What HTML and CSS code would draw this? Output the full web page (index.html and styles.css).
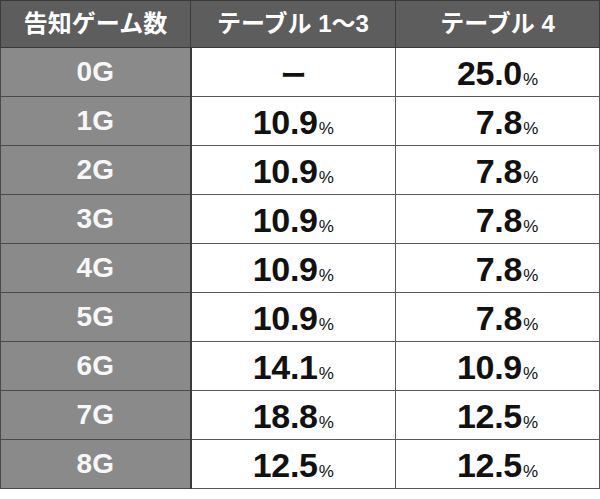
FILE: index.html
```html
<!DOCTYPE html>
<html lang="ja">
<head>
<meta charset="utf-8">
<title>告知ゲーム数</title>
<link rel="stylesheet" href="styles.css">
</head>
<body>
<table class="odds">
  <colgroup>
    <col class="c1">
    <col class="c2">
    <col class="c3">
  </colgroup>
  <thead>
    <tr class="head-row">
      <th>告知ゲーム数</th>
      <th>テーブル 1〜3</th>
      <th>テーブル 4</th>
    </tr>
  </thead>
  <tbody>
    <tr><th>0G</th><td><span class="dash">ー</span></td><td>25.0<span class="pct">%</span></td></tr>
    <tr><th>1G</th><td>10.9<span class="pct">%</span></td><td class="short">7.8<span class="pct">%</span></td></tr>
    <tr><th>2G</th><td>10.9<span class="pct">%</span></td><td class="short">7.8<span class="pct">%</span></td></tr>
    <tr><th>3G</th><td>10.9<span class="pct">%</span></td><td class="short">7.8<span class="pct">%</span></td></tr>
    <tr><th>4G</th><td>10.9<span class="pct">%</span></td><td class="short">7.8<span class="pct">%</span></td></tr>
    <tr><th>5G</th><td>10.9<span class="pct">%</span></td><td class="short">7.8<span class="pct">%</span></td></tr>
    <tr><th>6G</th><td>14.1<span class="pct">%</span></td><td>10.9<span class="pct">%</span></td></tr>
    <tr><th>7G</th><td>18.8<span class="pct">%</span></td><td>12.5<span class="pct">%</span></td></tr>
    <tr><th>8G</th><td>12.5<span class="pct">%</span></td><td>12.5<span class="pct">%</span></td></tr>
  </tbody>
</table>
</body>
</html>
```
FILE: styles.css
```css
html, body {
  margin: 0;
  padding: 0;
  background: #ffffff;
}

.odds {
  border-collapse: collapse;
  table-layout: fixed;
  width: 599px;
  font-family: "Liberation Sans", "Noto Sans CJK JP", sans-serif;
}

.c1 { width: 190px; }
.c2 { width: 205px; }
.c3 { width: 204px; }

.odds tr {
  height: 49px;
}

.odds tr.head-row {
  height: 47px;
}

.odds thead th {
  padding: 0;
  background: #5d5d5d;
  color: #ffffff;
  font-size: 24px;
  font-weight: bold;
  text-align: center;
  vertical-align: middle;
  border: 1px solid #3a3a3a;
  line-height: 1;
}

.odds tbody th {
  padding: 0;
  background: #8a8a8a;
  color: #f7f7f7;
  font-size: 28px;
  font-weight: bold;
  text-align: center;
  vertical-align: middle;
  border: 1px solid #4a4a4a;
  border-right: 2px solid #3a3a3a;
  line-height: 1;
}

.odds td {
  padding: 1px 0 0 0;
  background: #ffffff;
  color: #111111;
  font-size: 34px;
  font-weight: bold;
  text-align: center;
  vertical-align: middle;
  border: 1px solid #5a5a5a;
  line-height: 1;
  letter-spacing: -0.3px;
}

.odds td.short {
  padding-left: 19px;
}

.pct {
  font-size: 17px;
  font-weight: normal;
  letter-spacing: 0;
  margin-left: 1px;
}

.dash {
  font-family: "Noto Sans CJK JP", sans-serif;
  font-size: 26px;
  font-weight: bold;
}
```
